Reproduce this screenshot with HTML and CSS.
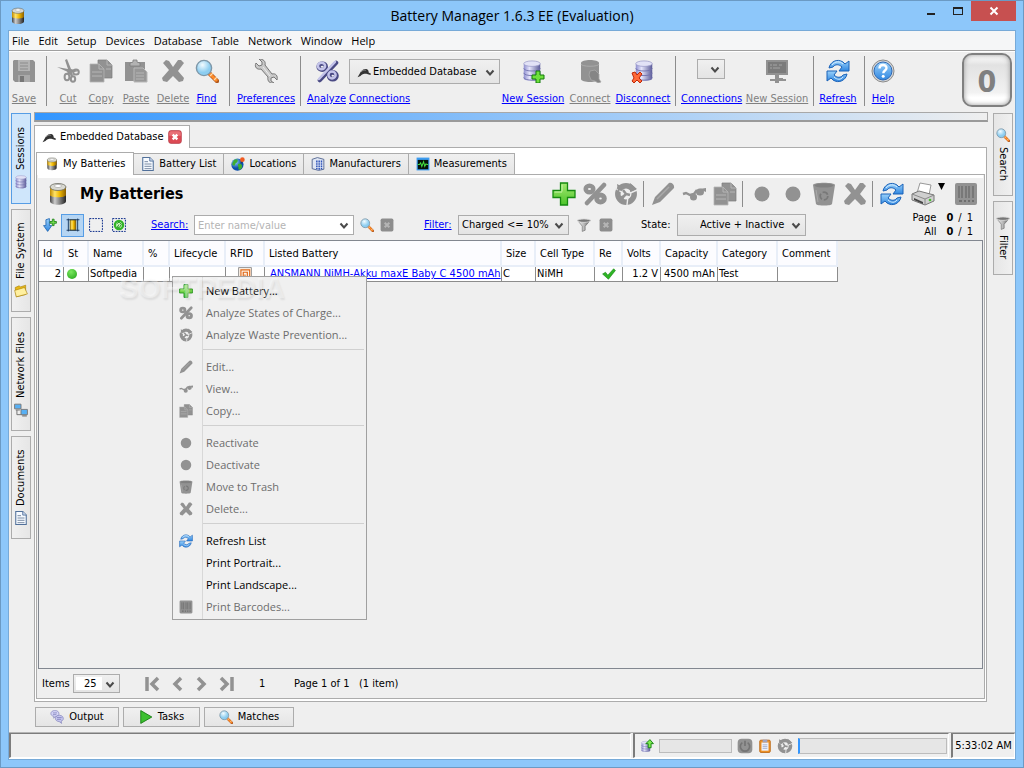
FILE: index.html
```html
<!DOCTYPE html>
<html lang="en">
<head>
    <meta charset="UTF-8">
    <meta name="viewport" content="width=device-width, initial-scale=1.0">
    <title>Battery Manager 1.6.3 EE (Evaluation)</title>
    <link rel="stylesheet" href="styles.css">
</head>
<body>
    <!-- icon sprite -->
    <svg class="sprite" width="0" height="0" aria-hidden="true">
        <defs>
            <linearGradient id="g-db"><stop offset="0" stop-color="#8f8fd0"/><stop offset=".35" stop-color="#e4e4fa"/><stop offset="1" stop-color="#5b5b98"/></linearGradient>
            <linearGradient id="g-gold"><stop offset="0" stop-color="#c08a00"/><stop offset=".3" stop-color="#ffe36a"/><stop offset=".6" stop-color="#f0b800"/><stop offset="1" stop-color="#8a5e00"/></linearGradient>
            <linearGradient id="g-steel"><stop offset="0" stop-color="#444"/><stop offset=".3" stop-color="#ccc"/><stop offset="1" stop-color="#222"/></linearGradient>
            <linearGradient id="g-metal"><stop offset="0" stop-color="#fafafa"/><stop offset=".5" stop-color="#b8b8b8"/><stop offset="1" stop-color="#555"/></linearGradient>
            <linearGradient id="g-plus" x2="0" y2="1"><stop offset="0" stop-color="#a4e870"/><stop offset="1" stop-color="#4cc42a"/></linearGradient>
            <linearGradient id="g-blue" x2="0" y2="1"><stop offset="0" stop-color="#9bd2fb"/><stop offset="1" stop-color="#2f86e0"/></linearGradient>
            <radialGradient id="g-glass" cx=".4" cy=".3"><stop offset="0" stop-color="#f2fbff"/><stop offset="1" stop-color="#8ccdf0"/></radialGradient>
            <radialGradient id="g-globe" cx=".35" cy=".3"><stop offset="0" stop-color="#8fd0ff"/><stop offset="1" stop-color="#0c4fa8"/></radialGradient>
        </defs>
        <symbol id="i-battery" viewBox="0 0 24 24">
            <path d="M4 5v14c0 5 16 5 16 0V5z" fill="url(#g-steel)"/>
            <path d="M4 5v8c0 3 16 3 16 0V5z" fill="url(#g-gold)"/>
            <ellipse cx="12" cy="5" rx="8" ry="3.5" fill="#d8d8d0" stroke="#6a6a60" stroke-width=".8"/>
            <ellipse cx="12" cy="4" rx="3.5" ry="1.6" fill="#fff" stroke="#999" stroke-width=".6"/>
        </symbol>
        <symbol id="i-save" viewBox="0 0 24 24">
            <path d="M2 1h19l2 2v20H3l-2-2V2z" fill="currentColor"/>
            <path d="M6 1h12v11H6z" fill="#b4b4b4"/>
            <path d="M8 4h8M8 7h8M8 10h8" stroke="#8c8c8c"/>
            <path d="M6 16h12v7H6z" fill="#a9a9a9"/><path d="M8 17h4v6H8z" fill="#777"/>
        </symbol>
        <symbol id="i-cut" viewBox="0 0 24 24">
            <path d="M1 8l11 2L9 1l2-1 4 10 8 2-9 2z" fill="currentColor"/>
            <path d="M12 10l1 5M14 12l2 5" stroke="currentColor" stroke-width="2.500"/>
            <ellipse cx="20" cy="13" rx="2.8" ry="2.6" fill="none" stroke="currentColor" stroke-width="2"/>
            <ellipse cx="11" cy="18" rx="2.4" ry="3.2" fill="none" stroke="currentColor" stroke-width="2"/>
            <ellipse cx="17" cy="20" rx="2.2" ry="2.8" fill="none" stroke="currentColor" stroke-width="2"/>
        </symbol>
        <symbol id="i-copy" viewBox="0 0 24 24">
            <path d="M9 1h9l5 5v13H9z" fill="currentColor" stroke="#7d7d7d" stroke-width=".7"/>
            <path d="M1 5h9l5 5v13H1z" fill="currentColor" stroke="#b5b5b5" stroke-width=".8"/>
            <path d="M18 1v5h5M10 5v5h5M3 13h10M3 17h10M17 10h5" fill="none" stroke="#b5b5b5"/>
        </symbol>
        <symbol id="i-paste" viewBox="0 0 24 24">
            <path d="M1 3h20v19H1z" fill="currentColor"/>
            <path d="M6 4l3-1V1h4v2l3 1v3H6z" fill="#b2b2b2" stroke="#7d7d7d" stroke-width=".8"/>
            <path d="M10 9h9l4 4v10H10z" fill="#979797" stroke="#b8b8b8"/>
            <path d="M12 14h8M12 17h8M12 20h8" stroke="#b5b5b5"/>
        </symbol>
        <symbol id="i-delete" viewBox="0 0 24 24">
            <path d="M5 1l3 1 4 6 5-7h3l3 3-6 8 6 7-1 3-4 1-6-6-6 6-4-1-1-3 7-8-6-7z" fill="currentColor"/>
        </symbol>
        <symbol id="i-find" viewBox="0 0 24 24">
            <path d="M14 14l8 8" stroke="#b05a20" stroke-width="4.500" stroke-linecap="round"/>
            <path d="M14 14l8 8" stroke="#ff8a28" stroke-width="3"/>
            <path d="M15 17l3-3M19 21l3-3" stroke="#ffd9a8" stroke-width="1.3"/>
            <circle cx="9" cy="9" r="7.6" fill="url(#g-glass)" stroke="#7e97a8" stroke-width="1.4"/>
        </symbol>
        <symbol id="i-wrench" viewBox="0 0 24 24">
            <path d="M2 4l3 3 3-1V3L5 0c4 0 7 2 6 6l7 9c4-1 6 2 5 6l-3-3-3 1v3l3 2c-4 1-7-2-6-6L7 10C3 11 0 8 2 4z" fill="#c9c9c9" stroke="#777"/>
            <path d="M9 8l7 9" stroke="#eee"/>
        </symbol>
        <symbol id="i-percent" viewBox="0 0 24 24">
            <path d="M4 21L21 3" stroke="currentColor" stroke-width="4.500" stroke-linecap="round"/>
            <ellipse cx="6.500" cy="7" rx="3.800" ry="3.300" fill="none" stroke="currentColor" stroke-width="4.500"/>
            <ellipse cx="17.500" cy="16.500" rx="3.800" ry="3.500" fill="none" stroke="currentColor" stroke-width="5"/>
        </symbol>
        <symbol id="i-percent-blue" viewBox="0 0 24 24">
            <g color="#4a4a84"><use href="#i-percent" x="1" y="1" width="23" height="23"/></g>
            <g fill="none" stroke="#c4c4ea" stroke-width="2.500" stroke-linecap="round"><path d="M4 20L20 3"/><ellipse cx="6.500" cy="7" rx="3.600" ry="3.200"/><ellipse cx="17" cy="16" rx="3.600" ry="3.400"/></g>
        </symbol>
        <symbol id="i-db" viewBox="0 0 24 24">
            <path d="M3 4v16c0 4 18 4 18 0V4z" fill="url(#g-db)"/>
            <path d="M3 9c0 4 18 4 18 0M3 14c0 4 18 4 18 0M3 19c0 4 18 4 18 0" fill="none" stroke="#7272ae"/>
            <ellipse cx="12" cy="4" rx="9" ry="3" fill="#e2e2f6" stroke="#9a9ac8" stroke-width=".8"/>
        </symbol>
        <symbol id="i-db-plus" viewBox="0 0 24 24">
            <use href="#i-db" x="0" y="0" width="22" height="24"/>
            <path d="M15 12h4v4h4v4h-4v4h-4v-4h-4v-4h4z" fill="#6ee03c" stroke="#137a0a"/>
        </symbol>
        <symbol id="i-db-gray" viewBox="0 0 24 24">
            <path d="M3 4v16c0 4 18 4 18 0V4c0-4-18-4-18 0z" fill="currentColor"/>
            <path d="M3 5c0 3 18 3 18 0" fill="none" stroke="#aaa"/>
            <path d="M12 12l5-1 4 4v5l2 3-3 1-3-2-4-1-2-5z" fill="#858585" stroke="#a8a8a8" stroke-width=".8"/>
        </symbol>
        <symbol id="i-db-x" viewBox="0 0 24 24">
            <use href="#i-db" x="2" y="0" width="22" height="24"/>
            <path d="M1 14l3-1 2 3 3-3 2 2-3 4 3 3-2 2-3-3-3 3-2-2 2-3z" fill="#ff6a3a" stroke="#c02808"/>
        </symbol>
        <symbol id="i-db-up" viewBox="0 0 24 24">
            <use href="#i-db" x="0" y="2" width="20" height="22"/>
            <path d="M17 1l6 7h-4v7h-5V8h-4z" fill="#7cea50" stroke="#0d7a0a" stroke-width="1.5"/>
        </symbol>
        <symbol id="i-monitor" viewBox="0 0 24 24">
            <path d="M1 1h22v15H1z" fill="currentColor"/><path d="M3 3h18v11H3z" fill="#7b7b7b"/>
            <path d="M5 6h2M8 6h4M14 6h3M5 9h2M8 9h7" stroke="#a5a5a5"/>
            <path d="M10 16h4v3h4v1h3v2h-7v2h-4v-2H5v-2h5z" fill="currentColor"/>
        </symbol>
        <symbol id="i-refresh" viewBox="0 0 24 24">
            <path d="M3 9C4 3 11-1 17 3l2 2 4-3v10H13l3-4c-3-3-7-3-9 0z" fill="url(#g-blue)" stroke="#1b62b8"/>
            <path d="M21 15c-1 6-8 10-14 6l-2-2-4 3V12h10l-3 4c3 3 7 3 9 0z" fill="url(#g-blue)" stroke="#1b62b8"/>
            <path d="M6 6c3-4 8-4 11-1M8 18c3 3 7 3 9 0" fill="none" stroke="#d4ecff"/>
        </symbol>
        <symbol id="i-help" viewBox="0 0 24 24">
            <circle cx="12" cy="12" r="11" fill="#d8d8d8" stroke="#8a8a8a"/><circle cx="12" cy="12" r="9" fill="url(#g-blue)" stroke="#2d68b4"/>
            <path d="M8.500 9.500c0-4.500 7-4.500 7-.5 0 2.500-3.200 2.500-3.200 5.200" fill="none" stroke="#fff" stroke-width="2.400"/><circle cx="12.200" cy="17.300" r="1.500" fill="#fff"/>
        </symbol>
        <symbol id="i-cap" viewBox="0 0 24 24">
            <path d="M1 21l4-7c2-5 7-8 11-7 3 1 4 3 4 6l4 2-1 2-7-2c-5 0-8 1-10 4z" fill="#333"/>
            <path d="M7 12c2-3 5-4 8-3" fill="none" stroke="#999" stroke-width="1.500"/>
        </symbol>
        <symbol id="i-doc" viewBox="0 0 24 24">
            <path d="M3 1h12l6 6v16H3z" fill="#f6faff" stroke="#51709a" stroke-width="1.800"/><path d="M15 1v6h6" fill="#cfdcf0" stroke="#51709a" stroke-width="1.500"/>
            <path d="M6 8h6M6 12h12M6 16h12M6 20h12" stroke="#6a7e98" stroke-width="1.500"/>
        </symbol>
        <symbol id="i-globe" viewBox="0 0 24 24">
            <circle cx="11" cy="13" r="10.500" fill="url(#g-globe)"/><path d="M5 5c5-3 8 0 6 3s-4 2-4 5-4 2-5-1M12 12c5-2 8 1 7 5s-5 6-6 4 1-3-1-5z" fill="#3fae30"/>
            <path d="M17 11l2-5" stroke="#333" stroke-width="1.500"/><circle cx="19.500" cy="4.500" r="4" fill="#f05a20"/>
        </symbol>
        <symbol id="i-maker" viewBox="0 0 24 24">
            <path d="M2 4l9-3 11 3v17l-9 2-11-3z" fill="#dfe6f4" stroke="#4c5f8c" stroke-width="1.500"/>
            <path d="M10 6v15M14 6v16M18 6v15" stroke="#2a50b8" stroke-width="2.500"/><path d="M6 10h15M6 14h15M6 18h15" stroke="#dfe6f4" stroke-width="1.300"/>
        </symbol>
        <symbol id="i-scope" viewBox="0 0 24 24">
            <path d="M1 1h22v22H1z" fill="#3d9cf0"/><path d="M3 5h18v16H3z" fill="#06140a"/>
            <path d="M3 13h3l2-3 2 6 3-8 2 8 2-4 2 1h2" fill="none" stroke="#44e040" stroke-width="1.800"/>
        </symbol>
        <symbol id="i-plus" viewBox="0 0 24 24">
            <path d="M8.500 1h7v7.500H23v7h-7.500V23h-7v-7.500H1v-7h7.500z" fill="url(#g-plus)" stroke="#168a10" stroke-width="1.300"/>
            <path d="M10 9.500V2.500M2.500 10H10" stroke="#cdf5b0"/>
        </symbol>
        <symbol id="i-recycle" viewBox="0 0 24 24">
            <circle cx="12" cy="12" r="8.200" fill="none" stroke="currentColor" stroke-width="5.500"/>
            <path d="M1 6l8 5M13 23l1-9M23 8l-9 4" stroke="#ececec" stroke-width="1.400"/>
            <path d="M16 1l7 6-7 3zM3 15l8-2-3 9zM9 5L3 2l1 8z" fill="currentColor"/>
            <path d="M9 8l3 4 4 1M9 15l3-3" stroke="currentColor" stroke-width="2.500" fill="none"/>
        </symbol>
        <symbol id="i-pencil" viewBox="0 0 24 24">
            <path d="M1 23l3-8L17 2c2-3 7 0 6 4L9 20z" fill="currentColor"/><path d="M6 17L18 5" stroke="#aaa" stroke-width="1.500"/>
        </symbol>
        <symbol id="i-view" viewBox="0 0 24 24">
            <path d="M1 12l3-1 4 2 4-1 3-4" fill="none" stroke="currentColor" stroke-width="2.500"/><circle cx="11.500" cy="15" r="3.500" fill="currentColor"/><ellipse cx="18" cy="10" rx="4" ry="3.500" fill="currentColor"/><path d="M17 7l7-1v4z" fill="currentColor"/>
        </symbol>
        <symbol id="i-dot" viewBox="0 0 24 24"><circle cx="12" cy="12" r="7.500" fill="currentColor"/></symbol>
        <symbol id="i-dot-large" viewBox="0 0 24 24"><circle cx="12" cy="12" r="9" fill="currentColor"/></symbol>
        <symbol id="i-trash" viewBox="0 0 24 24">
            <path d="M1 3c0-3 22-3 22 0l-3 19c-1 2-15 2-16 0z" fill="currentColor"/><ellipse cx="12" cy="3.500" rx="9.500" ry="2" fill="#808080"/>
            <circle cx="12" cy="14" r="3.800" fill="none" stroke="#787878" stroke-width="1.800" stroke-dasharray="6 2"/><path d="M4 8l2 12" stroke="#aaa"/>
        </symbol>
        <symbol id="i-printer" viewBox="0 0 24 24">
            <path d="M6 11L9 1l11 2-2 10z" fill="#fff" stroke="#999"/><path d="M1 12l7-3 15 4v6l-9 4-13-5z" fill="#cfcfcf" stroke="#777"/>
            <path d="M1 12l13 5 9-4M14 17v6" fill="none" stroke="#8a8a8a"/><path d="M3 16l9 4v2l-9-4z" fill="#444"/><circle cx="19" cy="18" r="1.300" fill="#48c030"/>
        </symbol>
        <symbol id="i-barcode" viewBox="0 0 24 24">
            <rect x="1" y="1" width="22" height="22" rx="2" fill="currentColor"/>
            <path d="M5 4v12M8 4v12M12 4v12M15 4v12M19 4v12" stroke="#6e6e6e" stroke-width="1.400"/><path d="M5 19h3M10 19h2M14 19h2M18 19h2" stroke="#6e6e6e" stroke-width="2"/>
        </symbol>
        <symbol id="i-insert" viewBox="0 0 24 24">
            <path d="M5 3l6-2v12h4L8 23 1 13h4z" fill="url(#g-blue)" stroke="#1f64b0" stroke-width="1.400"/>
            <path d="M16 2h3v4h4v3h-4v4h-3V9h-4V6h4z" fill="#78e050" stroke="#0d780a" stroke-width="1.300"/>
        </symbol>
        <symbol id="i-columns" viewBox="0 0 24 24">
            <path d="M7 3h10v18H7z" fill="url(#g-gold)" stroke="#7a5c00"/>
            <path d="M4 1v22M20 1v22M1 3h22M1 21h22" stroke="#16365c" stroke-width="1.600"/>
        </symbol>
        <symbol id="i-select" viewBox="0 0 24 24"><path d="M1 1h22v22H1z" fill="none" stroke="#0a2a8a" stroke-width="1.700" stroke-dasharray="3 1.800"/></symbol>
        <symbol id="i-eco" viewBox="0 0 24 24">
            <use href="#i-select" width="24" height="24"/><circle cx="12" cy="12" r="7" fill="#d4f5c4" stroke="#32b428" stroke-width="4"/><path d="M8 10l4-3 4 4-3 5H9l3-5" fill="none" stroke="#159018" stroke-width="1.600"/>
        </symbol>
        <symbol id="i-funnel" viewBox="0 0 24 24">
            <path d="M1 4l8 10v9l5-2v-7l9-10z" fill="url(#g-metal)" stroke="#666"/><ellipse cx="12" cy="4.500" rx="11" ry="3" fill="#777" stroke="#ddd" stroke-width="1.500"/>
        </symbol>
        <symbol id="i-clear" viewBox="0 0 24 24">
            <rect x="1" y="1" width="22" height="22" rx="3" fill="#8d8d8d"/><path d="M8 8l8 8M16 8l-8 8" stroke="#b5b5b5" stroke-width="3.500"/>
        </symbol>
        <symbol id="i-close" viewBox="0 0 24 24">
            <rect x="1" y="1" width="22" height="22" rx="4" fill="#dc4a54" stroke="#a82c38"/><path d="M2 5q0-3 3-3h14q3 0 3 3v5H2z" fill="#f08a90" opacity=".6"/><path d="M8 8l8 8M16 8l-8 8" stroke="#fff" stroke-width="4"/>
        </symbol>
        <symbol id="i-rfid" viewBox="0 0 24 24">
            <path d="M1 1h22v22H1z" fill="#fff4e8" stroke="#888" stroke-width="1.500"/><path d="M5 21V5h15v15H9V9h7v8h-4v-4" fill="none" stroke="#e06818" stroke-width="2"/>
        </symbol>
        <symbol id="i-check" viewBox="0 0 24 24"><path d="M1 12l5-3 4 5L20 3l3 3-12 15z" fill="#2eb524" stroke="#138010"/></symbol>
        <symbol id="i-folder" viewBox="0 0 24 24">
            <path d="M2 6l7-3 2 2 9-3v16L4 22z" fill="#e8b818" stroke="#a67c00"/><path d="M4 22L1 11l17-5 5 11z" fill="#fff0a0" stroke="#a67c00"/>
        </symbol>
        <symbol id="i-net" viewBox="0 0 24 24">
            <path d="M5 12v8h8" fill="none" stroke="#666" stroke-width="1.500"/>
            <path d="M1 2h11v8H1zM12 11h11v9H12z" fill="#58b0f4" stroke="#777" stroke-width="1.600"/><path d="M3 12h7M14 22h8" stroke="#777" stroke-width="2"/>
        </symbol>
        <symbol id="i-chat" viewBox="0 0 24 24">
            <path d="M8 1c9-1 10 10 2 10l-4 3 1-3C-1 10 0 1 8 1z" fill="#d6d6f6" stroke="#7676b4"/>
            <path d="M16 9c8 0 9 9 3 10l1 4-4-3C6 19 8 9 16 9z" fill="#c6c6ee" stroke="#7676b4"/><path d="M5 5h7M5 8h6M12 13h8M12 16h7" stroke="#7676b4" stroke-width="1.200"/>
        </symbol>
        <symbol id="i-play" viewBox="0 0 24 24"><path d="M3 1l19 11L3 23z" fill="#3cc030" stroke="#157a10" stroke-width="1.500"/></symbol>
        <symbol id="i-power" viewBox="0 0 24 24">
            <rect x="1" y="1" width="22" height="22" rx="6" fill="currentColor"/><path d="M8 7a7 7 0 1 0 8 0M12 4v8" fill="none" stroke="#747474" stroke-width="2.500"/>
        </symbol>
        <symbol id="i-clipboard" viewBox="0 0 24 24">
            <rect x="3" y="2" width="18" height="21" rx="2" fill="#f09428" stroke="#b86410" stroke-width="1.500"/><path d="M6 6h12v14H6z" fill="#eef2fc"/><path d="M8 1h8v5H8z" fill="#a4a4bc"/><path d="M8 10h8M8 13h8M8 16h8" stroke="#7888b0"/>
        </symbol>
        <symbol id="i-chevron" viewBox="0 0 10 8"><path d="M1.500 1.500L5 5.500l3.500-4" fill="none" stroke="#4a4a4a" stroke-width="2"/></symbol>
        <symbol id="i-prev" viewBox="0 0 16 16"><path d="M12 2L6 8l6 6" fill="none" stroke="currentColor" stroke-width="3.500"/></symbol>
        <symbol id="i-next" viewBox="0 0 16 16"><path d="M4 2l6 6-6 6" fill="none" stroke="currentColor" stroke-width="3.500"/></symbol>
        <symbol id="i-first" viewBox="0 0 16 16"><path d="M3 1v14M14 2L8 8l6 6" fill="none" stroke="currentColor" stroke-width="3.500"/></symbol>
        <symbol id="i-last" viewBox="0 0 16 16"><path d="M13 1v14M2 2l6 6-6 6" fill="none" stroke="currentColor" stroke-width="3.500"/></symbol>
    </svg>

    <div class="window">
        <header class="titlebar">
            <svg class="icon app-icon"><use href="#i-battery"/></svg>
            <h1>Battery Manager 1.6.3 EE (Evaluation)</h1>
            <div class="window-buttons">
                <button type="button" aria-label="Minimize"><span class="glyph-min"></span></button>
                <button type="button" aria-label="Maximize"><span class="glyph-max"></span></button>
                <button type="button" class="close" aria-label="Close"><svg viewBox="0 0 10 10"><path d="M1.500 1.500l7 7M8.500 1.500l-7 7" stroke="#fff" stroke-width="2"/></svg></button>
            </div>
        </header>

        <div class="client">
            <nav class="menubar">
                <button type="button">File</button>
                <button type="button">Edit</button>
                <button type="button">Setup</button>
                <button type="button">Devices</button>
                <button type="button">Database</button>
                <button type="button">Table</button>
                <button type="button">Network</button>
                <button type="button">Window</button>
                <button type="button">Help</button>
            </nav>

            <div class="toolbar">
                <button type="button" class="tool" disabled><svg class="icon"><use href="#i-save"/></svg><span>Save</span></button>
                <i class="sep"></i>
                <button type="button" class="tool" disabled><svg class="icon"><use href="#i-cut"/></svg><span>Cut</span></button>
                <button type="button" class="tool" disabled><svg class="icon"><use href="#i-copy"/></svg><span>Copy</span></button>
                <button type="button" class="tool" disabled><svg class="icon"><use href="#i-paste"/></svg><span>Paste</span></button>
                <button type="button" class="tool" disabled><svg class="icon"><use href="#i-delete"/></svg><span>Delete</span></button>
                <button type="button" class="tool"><svg class="icon"><use href="#i-find"/></svg><span>Find</span></button>
                <i class="sep"></i>
                <button type="button" class="tool"><svg class="icon"><use href="#i-wrench"/></svg><span>Preferences</span></button>
                <i class="sep"></i>
                <button type="button" class="tool"><svg class="icon"><use href="#i-percent-blue"/></svg><span>Analyze</span></button>
                <div class="tool tool-combo">
                    <span class="combo combo-db">
                        <svg class="icon small lead"><use href="#i-cap"/></svg>
                        <select id="connection"><option>Embedded Database</option></select>
                        <svg class="chevron"><use href="#i-chevron"/></svg>
                    </span>
                    <label for="connection">Connections</label>
                </div>
                <button type="button" class="tool"><svg class="icon"><use href="#i-db-plus"/></svg><span>New Session</span></button>
                <button type="button" class="tool" disabled><svg class="icon"><use href="#i-db-gray"/></svg><span>Connect</span></button>
                <button type="button" class="tool"><svg class="icon"><use href="#i-db-x"/></svg><span>Disconnect</span></button>
                <i class="sep"></i>
                <div class="tool tool-combo">
                    <span class="combo combo-net">
                        <select id="net-connection"><option></option></select>
                        <svg class="chevron"><use href="#i-chevron"/></svg>
                    </span>
                    <label for="net-connection">Connections</label>
                </div>
                <button type="button" class="tool" disabled><svg class="icon"><use href="#i-monitor"/></svg><span>New Session</span></button>
                <i class="sep"></i>
                <button type="button" class="tool"><svg class="icon"><use href="#i-refresh"/></svg><span>Refresh</span></button>
                <i class="sep"></i>
                <button type="button" class="tool"><svg class="icon"><use href="#i-help"/></svg><span>Help</span></button>
                <output class="counter">0</output>
            </div>

            <div class="workspace">
                <aside class="rail rail-left">
                    <button type="button" class="selected"><svg class="icon small"><use href="#i-db"/></svg>Sessions</button>
                    <button type="button"><svg class="icon small"><use href="#i-folder"/></svg>File System</button>
                    <button type="button"><svg class="icon small"><use href="#i-net"/></svg>Network Files</button>
                    <button type="button"><svg class="icon small"><use href="#i-doc"/></svg>Documents</button>
                </aside>

                <main class="main">
                    <div class="strip"></div>
                    <div class="tabs session-tabs">
                        <div class="tab active"><svg class="icon small"><use href="#i-cap"/></svg>Embedded Database
                            <button type="button" class="tab-close" aria-label="Close session"><svg class="icon small"><use href="#i-close"/></svg></button>
                        </div>
                    </div>

                    <div class="session">
                        <div class="tabs view-tabs">
                            <button type="button" class="tab active"><svg class="icon small"><use href="#i-battery"/></svg>My Batteries</button>
                            <button type="button" class="tab"><svg class="icon small"><use href="#i-doc"/></svg>Battery List</button>
                            <button type="button" class="tab"><svg class="icon small"><use href="#i-globe"/></svg>Locations</button>
                            <button type="button" class="tab"><svg class="icon small"><use href="#i-maker"/></svg>Manufacturers</button>
                            <button type="button" class="tab"><svg class="icon small"><use href="#i-scope"/></svg>Measurements</button>
                        </div>

                        <section class="view">
                            <div class="view-head">
                                <svg class="icon"><use href="#i-battery"/></svg>
                                <h2>My Batteries</h2>
                                <div class="actions">
                                    <button type="button" aria-label="New"><svg class="icon"><use href="#i-plus"/></svg></button>
                                    <button type="button" disabled aria-label="Analyze charge"><svg class="icon"><use href="#i-percent"/></svg></button>
                                    <button type="button" disabled aria-label="Analyze waste"><svg class="icon"><use href="#i-recycle"/></svg></button>
                                    <i class="sep"></i>
                                    <button type="button" disabled aria-label="Edit"><svg class="icon"><use href="#i-pencil"/></svg></button>
                                    <button type="button" disabled aria-label="View"><svg class="icon"><use href="#i-view"/></svg></button>
                                    <button type="button" disabled aria-label="Copy"><svg class="icon"><use href="#i-copy"/></svg></button>
                                    <i class="sep"></i>
                                    <button type="button" disabled aria-label="Reactivate"><svg class="icon"><use href="#i-dot"/></svg></button>
                                    <button type="button" disabled aria-label="Deactivate"><svg class="icon"><use href="#i-dot"/></svg></button>
                                    <button type="button" disabled aria-label="Trash"><svg class="icon"><use href="#i-trash"/></svg></button>
                                    <button type="button" disabled aria-label="Delete"><svg class="icon"><use href="#i-delete"/></svg></button>
                                    <i class="sep"></i>
                                    <button type="button" aria-label="Refresh"><svg class="icon"><use href="#i-refresh"/></svg></button>
                                    <button type="button" aria-label="Print"><svg class="icon"><use href="#i-printer"/></svg></button>
                                    <button type="button" class="more" aria-label="Print options"><svg viewBox="0 0 8 8"><path d="M0 0h7L3.500 7z"/></svg></button>
                                    <button type="button" disabled aria-label="Barcodes"><svg class="icon"><use href="#i-barcode"/></svg></button>
                                </div>
                            </div>

                            <div class="filters">
                                <div class="modes">
                                    <button type="button" aria-label="Insert"><svg class="icon small"><use href="#i-insert"/></svg></button>
                                    <button type="button" class="pressed" aria-label="Fit columns"><svg class="icon small"><use href="#i-columns"/></svg></button>
                                    <button type="button" aria-label="Selection"><svg class="icon small"><use href="#i-select"/></svg></button>
                                    <button type="button" aria-label="Recycled"><svg class="icon small"><use href="#i-eco"/></svg></button>
                                </div>
                                <div class="search">
                                    <label class="link" for="search">Search:</label>
                                    <span class="combo combo-search">
                                        <input id="search" type="text" placeholder="Enter name/value">
                                        <svg class="chevron"><use href="#i-chevron"/></svg>
                                    </span>
                                    <svg class="icon small"><use href="#i-find"/></svg>
                                    <svg class="icon small"><use href="#i-clear"/></svg>
                                </div>
                                <div class="filter">
                                    <label class="link" for="filter">Filter:</label>
                                    <span class="combo combo-filter">
                                        <select id="filter"><option>Charged &lt;= 10%</option></select>
                                        <svg class="chevron"><use href="#i-chevron"/></svg>
                                    </span>
                                    <svg class="icon small"><use href="#i-funnel"/></svg>
                                    <svg class="icon small"><use href="#i-clear"/></svg>
                                </div>
                                <div class="state">
                                    <label for="state">State:</label>
                                    <span class="combo combo-state">
                                        <select id="state"><option>Active + Inactive</option></select>
                                        <svg class="chevron"><use href="#i-chevron"/></svg>
                                    </span>
                                </div>
                                <div class="totals">
                                    <span>Page</span><b>0</b><span>/</span><span>1</span>
                                    <span>All</span><b>0</b><span>/</span><span>1</span>
                                </div>
                            </div>

                            <div class="grid">
                                <table>
                                    <colgroup>
                                        <col class="w-id"><col class="w-st"><col class="w-name"><col class="w-pct"><col class="w-life"><col class="w-rfid"><col class="w-listed">
                                        <col class="w-size"><col class="w-cell"><col class="w-re"><col class="w-volts"><col class="w-cap"><col class="w-cat"><col class="w-com">
                                    </colgroup>
                                    <thead>
                                        <tr>
                                            <th>Id</th><th>St</th><th>Name</th><th>%</th><th>Lifecycle</th><th>RFID</th><th>Listed Battery</th>
                                            <th>Size</th><th>Cell Type</th><th>Re</th><th>Volts</th><th>Capacity</th><th>Category</th><th>Comment</th>
                                        </tr>
                                    </thead>
                                    <tbody>
                                        <tr>
                                            <td class="num">2</td>
                                            <td><span class="led"></span></td>
                                            <td>Softpedia</td>
                                            <td></td>
                                            <td></td>
                                            <td class="mid"><svg class="icon small"><use href="#i-rfid"/></svg></td>
                                            <td class="listed"><a href="#">ANSMANN NiMH-Akku maxE Baby C 4500 mAh</a></td>
                                            <td>C</td>
                                            <td>NiMH</td>
                                            <td class="mid"><svg class="icon small"><use href="#i-check"/></svg></td>
                                            <td class="num">1.2 V</td>
                                            <td class="num">4500 mAh</td>
                                            <td>Test</td>
                                            <td></td>
                                        </tr>
                                    </tbody>
                                </table>
                            </div>

                            <div class="pager">
                                <label for="items">Items</label>
                                <span class="combo combo-items">
                                    <select id="items"><option>25</option></select>
                                    <svg class="chevron"><use href="#i-chevron"/></svg>
                                </span>
                                <div class="pager-nav">
                                    <button type="button" disabled aria-label="First"><svg><use href="#i-first"/></svg></button>
                                    <button type="button" disabled aria-label="Previous"><svg><use href="#i-prev"/></svg></button>
                                    <button type="button" disabled aria-label="Next"><svg><use href="#i-next"/></svg></button>
                                    <button type="button" disabled aria-label="Last"><svg><use href="#i-last"/></svg></button>
                                </div>
                                <span class="page-no">1</span>
                                <span>Page 1 of 1 &nbsp; (1 item)</span>
                            </div>
                        </section>
                    </div>

                    <div class="docks">
                        <button type="button"><svg class="icon small"><use href="#i-chat"/></svg>Output</button>
                        <button type="button"><svg class="icon small"><use href="#i-play"/></svg>Tasks</button>
                        <button type="button"><svg class="icon small"><use href="#i-find"/></svg>Matches</button>
                    </div>
                </main>

                <aside class="rail rail-right">
                    <button type="button"><svg class="icon small"><use href="#i-find"/></svg>Search</button>
                    <button type="button"><svg class="icon small"><use href="#i-funnel"/></svg>Filter</button>
                </aside>
            </div>

            <footer class="statusbar">
                <div class="cell message"></div>
                <div class="cell tasks">
                    <svg class="icon small"><use href="#i-db-up"/></svg>
                    <span class="meter"></span>
                    <svg class="icon gray"><use href="#i-power"/></svg>
                    <svg class="icon small"><use href="#i-clipboard"/></svg>
                    <svg class="icon small gray"><use href="#i-recycle"/></svg>
                    <span class="meter wide"></span>
                </div>
                <div class="cell clock">5:33:02 AM</div>
            </footer>
        </div>

        <ul class="context-menu">
            <li><button type="button"><svg class="icon small"><use href="#i-plus"/></svg><span>New Battery...</span></button></li>
            <li><button type="button" disabled><svg class="icon small"><use href="#i-percent"/></svg><span>Analyze States of Charge...</span></button></li>
            <li><button type="button" disabled><svg class="icon small"><use href="#i-recycle"/></svg><span>Analyze Waste Prevention...</span></button></li>
            <li class="line"></li>
            <li><button type="button" disabled><svg class="icon small"><use href="#i-pencil"/></svg><span>Edit...</span></button></li>
            <li><button type="button" disabled><svg class="icon small"><use href="#i-view"/></svg><span>View...</span></button></li>
            <li><button type="button" disabled><svg class="icon small"><use href="#i-copy"/></svg><span>Copy...</span></button></li>
            <li class="line"></li>
            <li><button type="button" disabled><svg class="icon small"><use href="#i-dot-large"/></svg><span>Reactivate</span></button></li>
            <li><button type="button" disabled><svg class="icon small"><use href="#i-dot-large"/></svg><span>Deactivate</span></button></li>
            <li><button type="button" disabled><svg class="icon small"><use href="#i-trash"/></svg><span>Move to Trash</span></button></li>
            <li><button type="button" disabled><svg class="icon small"><use href="#i-delete"/></svg><span>Delete...</span></button></li>
            <li class="line"></li>
            <li><button type="button"><svg class="icon small"><use href="#i-refresh"/></svg><span>Refresh List</span></button></li>
            <li><button type="button"><i></i><span>Print Portrait...</span></button></li>
            <li><button type="button"><i></i><span>Print Landscape...</span></button></li>
            <li><button type="button" disabled><svg class="icon small"><use href="#i-barcode"/></svg><span>Print Barcodes...</span></button></li>
        </ul>
        <div class="watermark">SOFTPEDIA</div>
    </div>
</body>
</html>
```

FILE: styles.css
```css
* {
    box-sizing: border-box;
}
body {
    margin: 0;
    font-family: "DejaVu Sans Condensed", "Noto Sans", sans-serif;
    font-size: 11px;
    line-height: 14px;
    color: #000;
}
button, input, select {
    font: inherit;
    color: inherit;
    margin: 0;
    padding: 0;
    border: 0;
    background: none;
}
a, .link {
    color: #00f;
    text-decoration: underline;
}
.sprite {
    position: absolute;
}
.icon {
    display: block;
    flex: none;
    width: 24px;
    height: 24px;
}
.icon.small {
    width: 14px;
    height: 14px;
}
button:disabled, .gray {
    color: #929292;
}
.sep {
    width: 1px;
    background: #8c8c8c;
    justify-self: center;
}

/* window frame */
.window {
    position: relative;
    display: flex;
    flex-direction: column;
    min-height: 100vh;
    padding: 0 7px 7px;
    border: 1px solid #6b9ac4;
    background: #8dc7fa;
}
.titlebar {
    display: grid;
    grid-template-columns: 1fr auto 1fr;
    height: 29px;
}
.titlebar h1 {
    margin: 0;
    align-self: center;
    font: 14px/20px "Open Sans", sans-serif;
}
.app-icon {
    width: 18px;
    height: 18px;
    margin: 6px 0 0 1px;
}
.window-buttons {
    display: flex;
    justify-self: end;
    height: 20px;
}
.window-buttons button {
    display: flex;
    justify-content: center;
    align-items: center;
    width: 27px;
}
.window-buttons .close {
    width: 45px;
    background: #c75050;
}
.close svg {
    width: 10px;
    height: 10px;
}
.glyph-min {
    width: 8px;
    height: 2px;
    margin-top: 5px;
    background: #222;
}
.glyph-max {
    width: 10px;
    height: 8px;
    border: 1px solid #222;
    border-top-width: 2px;
}
.client {
    display: flex;
    flex-direction: column;
    flex: 1;
    border: 1px solid #77aad8;
    background: #efefef;
}

/* menu and toolbar */
.menubar {
    display: flex;
    gap: 9px;
    height: 20px;
    padding: 0 3px;
    border-bottom: 1px solid #a0a0a0;
    background: #f5f6f7;
    font: 11px/19px "Open Sans", sans-serif;
}
.toolbar {
    display: grid;
    grid-template-columns: 30px 14px 30px 36px 34px 40px 27px 18px 56px 12px 41px 154px 64px 50px 56px 8px 66px 64px 8px 42px 10px 28px 1fr;
    height: 61px;
    padding: 1px 3px 0 0;
    border-top: 1px solid #fff;
}
.toolbar .sep {
    height: 50px;
    margin-top: 3px;
}
.tool {
    display: flex;
    flex-direction: column;
    align-items: center;
    justify-content: space-between;
    height: 53px;
    padding-top: 6px;
    color: #00f;
    white-space: nowrap;
}
.tool span, .tool label {
    text-decoration: underline;
}
.tool:disabled span {
    color: #808080;
}
.tool-combo {
    align-items: flex-start;
    padding: 6px 2px 0;
}
.combo, .tool .combo {
    display: inline-grid;
    align-items: center;
    border: 1px solid #acacac;
    background: linear-gradient(#f0f0f0, #e4e4e4);
    color: #000;
    text-decoration: none;
}
.combo > * {
    grid-area: 1 / 1;
}
.combo select, .combo input {
    width: 100%;
    height: 100%;
    padding-left: 3px;
    appearance: none;
    outline: 0;
}
.combo .lead {
    margin-left: 7px;
}
.chevron {
    width: 10px;
    height: 8px;
    justify-self: end;
    margin: 2px 4px 0 0;
    pointer-events: none;
}
.combo-db {
    width: 151px;
    height: 25px;
}
.combo-db select {
    padding-left: 23px;
}
.combo-net {
    width: 28px;
    height: 20px;
    margin-left: 16px;
}
.counter {
    justify-self: end;
    width: 50px;
    height: 54px;
    border: 2px solid #808080;
    border-radius: 10px;
    background: linear-gradient(#fff, #e2e2e2 20%, #f2f2f2 75%, #fff 85%);
    box-shadow: inset 0 0 5px #999;
    color: #808080;
    font: bold 30px/54px "DejaVu Sans Condensed", sans-serif;
    text-align: center;
}

/* side rails */
.workspace {
    display: flex;
    flex: 1;
}
.rail {
    display: flex;
    flex-direction: column;
    gap: 5px;
    width: 24px;
    padding: 1px 2px 0;
}
.rail button {
    display: flex;
    align-items: center;
    justify-content: center;
    gap: 5px;
    width: 20px;
    height: 103px;
    border: 1px solid #acacac;
    background: linear-gradient(90deg, #e6e6e6, #f0f0f0);
    writing-mode: vertical-rl;
}
.rail-left button {
    transform: rotate(180deg);
}
.rail-left .icon {
    transform: rotate(180deg);
}
.rail-left button:nth-child(1) {
    height: 91px;
}
.rail-left button:nth-child(3) {
    height: 114px;
}
.rail .selected {
    border-color: #569de5;
    background: #cfe6fb;
}
.rail-right button {
    height: 83px;
}
.rail-right button:nth-child(2) {
    height: 74px;
}

/* tabs */
.main {
    display: flex;
    flex-direction: column;
    flex: 1;
    min-width: 0;
    padding: 0 3px 0 1px;
}
.strip {
    height: 10px;
    border: 1px solid #a8a8a8;
    border-bottom: 2px solid #9a9a9a;
    background: linear-gradient(90deg, #3296ff, #b2d3f6 70%, #efefef);
}
.tabs {
    display: flex;
    align-items: flex-end;
}
.tab {
    display: flex;
    align-items: center;
    gap: 4px;
    height: 21px;
    padding: 0 7px;
    border: 1px solid #acacac;
    border-bottom: 0;
    background: linear-gradient(#f0f0f0, #e5e5e5);
    white-space: nowrap;
}
.tab.active {
    background: #fff;
}
.session-tabs {
    padding-top: 3px;
}
.session-tabs .tab {
    height: 23px;
    margin-bottom: -1px;
    position: relative;
}
.session {
    display: flex;
    flex-direction: column;
    flex: 1;
    margin-right: 1px;
    padding: 4px 1px 2px;
    border: 1px solid #acacac;
    background: #fff;
}
.view-tabs .tab.active {
    height: 23px;
    margin-bottom: -1px;
    padding: 0 8px;
    position: relative;
}
.view-tabs .tab + .tab {
    margin-left: -1px;
}
.view {
    display: flex;
    flex-direction: column;
    flex: 1;
    border: 1px solid #acacac;
    background: #efefef;
    padding: 0 1px;
}
.view-head {
    display: flex;
    align-items: center;
    gap: 10px;
    height: 36px;
    padding: 2px 2px 0 8px;
    box-shadow: inset 0 3px #fff;
}
.view-head h2 {
    flex: 1;
    margin: 0;
    font: bold 16px/20px "DejaVu Sans Condensed", sans-serif;
}
.actions {
    display: flex;
    align-items: center;
}
.actions button {
    display: flex;
    justify-content: center;
    width: 31px;
}
.actions .sep {
    height: 26px;
    margin: 0 3px 0 2px;
}
.actions .more {
    width: 12px;
    align-self: flex-start;
    justify-content: flex-start;
    padding-top: 2px;
}
.more svg {
    width: 8px;
    height: 8px;
}

/* search and filter row */
.filters {
    display: grid;
    grid-template-columns: 113px 273px 217px 1fr auto;
    align-items: center;
    height: 28px;
    margin-bottom: 1px;
}
.filters > div {
    display: flex;
    align-items: center;
}
.modes button {
    display: flex;
    justify-content: center;
    align-items: center;
    width: 23px;
    height: 23px;
    border: 1px solid transparent;
}
.modes .pressed {
    border-color: #569de5;
    background: #b5d5f3;
}
.filters .search {
    gap: 6px;
}
.filters .filter {
    gap: 8px;
}
.filters .state {
    gap: 6px;
}
.search .link {
    width: 37px;
}
.filter .link {
    width: 26px;
}
.state label {
    width: 30px;
}
.combo-search {
    width: 160px;
    height: 20px;
    background: #fff;
}
.combo-search input::placeholder {
    color: #b4b4b4;
}
.combo-filter {
    width: 111px;
    height: 20px;
}
.combo-state {
    width: 129px;
    height: 22px;
}
.combo-state select {
    padding-left: 22px;
}
.filters .totals {
    display: grid;
    grid-template-columns: auto auto auto auto;
    column-gap: 5px;
    justify-items: end;
    padding-right: 10px;
}
.totals b {
    margin-left: 5px;
}

/* table */
.grid {
    flex: 1;
    border: 1px solid #828790;
}
.grid table {
    width: 799px;
    table-layout: fixed;
    border-collapse: separate;
    border-spacing: 0;
}
.grid th {
    height: 26px;
    padding: 2px 4px 0;
    border-right: 2px solid #e8eef8;
    border-bottom: 2px solid #e8eef8;
    background: #fcfcff;
    font-weight: normal;
    text-align: left;
    white-space: nowrap;
}
.grid td {
    height: 15px;
    padding: 0 1px;
    border-right: 1px solid #8c8c8c;
    border-bottom: 1px solid #8c8c8c;
    background: #fff;
    white-space: nowrap;
}
.grid .num {
    padding-right: 2px;
    text-align: right;
}
.grid .mid .icon {
    margin: 0 auto;
}
.grid .listed {
    padding-left: 5px;
}
.led {
    display: block;
    width: 10px;
    height: 10px;
    margin-left: 2px;
    border-radius: 50%;
    background: radial-gradient(circle at 40% 30%, #7be85f, #1fa015);
}
.w-id { width: 25px; }
.w-st { width: 25px; }
.w-name { width: 55px; }
.w-pct { width: 26px; }
.w-life { width: 56px; }
.w-rfid { width: 39px; }
.w-listed { width: 237px; }
.w-size { width: 34px; }
.w-cell { width: 59px; }
.w-re { width: 28px; }
.w-volts { width: 38px; }
.w-cap { width: 57px; }
.w-cat { width: 60px; }
.w-com { width: 60px; }

.pager {
    display: flex;
    align-items: center;
    height: 29px;
    padding-left: 4px;
}
.pager label {
    width: 31px;
}
.combo-items {
    width: 47px;
    height: 19px;
}
.combo-items select {
    width: 26px;
    height: 13px;
    margin-left: 2px;
    padding-left: 8px;
    background: #fff;
}
.pager-nav {
    display: flex;
    gap: 9px;
    margin-left: 24px;
}
.pager-nav svg {
    display: block;
    width: 16px;
    height: 16px;
}
.page-no {
    width: 35px;
    margin-left: 24px;
}
.docks {
    display: flex;
    gap: 4px;
    padding: 5px 1px;
}
.docks button {
    display: flex;
    align-items: center;
    justify-content: center;
    gap: 5px;
    width: 84px;
    height: 20px;
    border: 1px solid #acacac;
    background: linear-gradient(#f0f0f0, #e5e5e5);
}
.docks button:nth-child(2) {
    width: 77px;
}
.docks button:nth-child(3) {
    width: 90px;
}

/* status bar */
.statusbar {
    display: flex;
    gap: 2px;
    height: 27px;
    border-top: 1px solid #b4b4b4;
    border-bottom: 1px solid #fff;
}
.cell {
    display: flex;
    align-items: center;
    border: 2px solid;
    border-color: #7c7c7c #fff #fff #7c7c7c;
    border-width: 1px 1px 1px 2px;
}
.message {
    flex: 1;
}
.tasks {
    gap: 5px;
    width: 316px;
    padding: 0 1px 0 5px;
}
.tasks .icon.gray {
    width: 16px;
    height: 16px;
}
.meter {
    width: 73px;
    height: 14px;
    border: 1px solid #bcbcbc;
    background: #e6e6e6;
}
.meter.wide {
    flex: 1;
    height: 16px;
    border-left: 2px solid #3296ff;
}
.clock {
    width: 64px;
    justify-content: center;
}

/* popup */
.context-menu {
    position: absolute;
    left: 171px;
    top: 275px;
    width: 195px;
    margin: 0;
    padding: 3px 2px 1px;
    border: 1px solid #a0a0a0;
    background: linear-gradient(90deg, transparent 29px, #d8d8d8 29px, #d8d8d8 30px, transparent 30px), #f0f0f0;
    list-style: none;
    font: 11px/22px "Open Sans", sans-serif;
}
.context-menu button {
    display: grid;
    grid-template-columns: 14px 1fr;
    column-gap: 13px;
    align-items: center;
    width: 100%;
    height: 22px;
    padding-left: 4px;
    text-align: left;
    white-space: nowrap;
}
.context-menu button:disabled span {
    color: #6d6d6d;
}
.line {
    height: 10px;
    margin-left: 28px;
    background: linear-gradient(transparent 3px, #d0d0d0 3px, #d0d0d0 4px, transparent 4px);
}
.watermark {
    position: absolute;
    left: 118px;
    top: 274px;
    color: rgba(255, 255, 255, .35);
    font: bold 29px/26px "Liberation Sans", sans-serif;
    text-shadow: 1px 2px 2px rgba(0, 0, 0, .08);
    pointer-events: none;
}
```
